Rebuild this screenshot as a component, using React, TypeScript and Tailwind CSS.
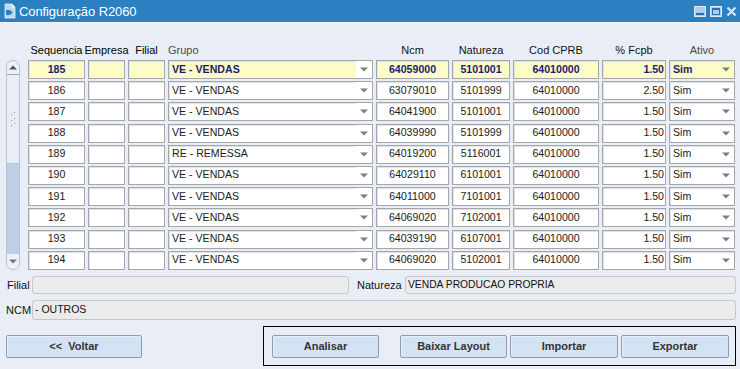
import React from "react";

const rows: string[][] = [
  ["185", "VE - VENDAS", "64059000", "5101001", "64010000", "1.50"],
  ["186", "VE - VENDAS", "63079010", "5101999", "64010000", "2.50"],
  ["187", "VE - VENDAS", "64041900", "5101001", "64010000", "1.50"],
  ["188", "VE - VENDAS", "64039990", "5101999", "64010000", "1.50"],
  ["189", "RE - REMESSA", "64019200", "5116001", "64010000", "1.50"],
  ["190", "VE - VENDAS", "64029110", "6101001", "64010000", "1.50"],
  ["191", "VE - VENDAS", "64011000", "7101001", "64010000", "1.50"],
  ["192", "VE - VENDAS", "64069020", "7102001", "64010000", "1.50"],
  ["193", "VE - VENDAS", "64039190", "6107001", "64010000", "1.50"],
  ["194", "VE - VENDAS", "64069020", "5102001", "64010000", "1.50"],
];

function DownTri({ color = "#7d7d7d" }: { color?: string }) {
  return (
    <svg width="8" height="5" viewBox="0 0 8 5">
      <path d="M0 0.5 L8 0.5 L4 4.5 Z" fill={color} />
    </svg>
  );
}

function UpTri({ color = "#555" }: { color?: string }) {
  return (
    <svg width="8" height="5" viewBox="0 0 8 5">
      <path d="M0 4.5 L8 4.5 L4 0.5 Z" fill={color} />
    </svg>
  );
}

function TitleBar() {
  return (
    <div className="h-[22px] bg-[#2b80c1] flex items-center shrink-0 relative">
      <div className="ml-[3px] w-[13px] h-[16px] flex items-center justify-center">
        <svg width="12" height="16" viewBox="0 0 12 16">
          <path d="M1 1 H8 L11 4 V15 H1 Z" fill="#bcd8f0" stroke="#e6f1fb" strokeWidth="0.8" />
          <path d="M8 1 V4 H11" fill="none" stroke="#ffffff" strokeWidth="0.8" />
          <rect x="2" y="7" width="3" height="5" fill="#2b80c1" />
          <path d="M5 6.5 L9 9.5 L5 12.5 Z" fill="#2b80c1" />
        </svg>
      </div>
      <span className="ml-[3px] text-white text-[13px] leading-none tracking-[-0.1px]">
        Configuração R2060
      </span>
      <div className="ml-auto mr-[3px] flex items-center gap-[4px]">
        <div className="w-[12px] h-[11px] bg-[#a9cdec] border border-[#d8eaf8] flex items-end justify-center pb-[1px]">
          <div className="w-[8px] h-[2px] bg-[#2b6fa8]" />
        </div>
        <div className="w-[12px] h-[11px] bg-[#a9cdec] border border-[#d8eaf8] flex items-center justify-center">
          <div className="w-[8px] h-[7px] border border-[#2b6fa8] border-t-2" />
        </div>
        <div className="w-[11px] h-[11px] flex items-center justify-center">
          <svg width="11" height="11" viewBox="0 0 11 11">
            <path d="M1.5 1.5 L9.5 9.5 M9.5 1.5 L1.5 9.5" stroke="#cfe4f6" strokeWidth="2.4" />
          </svg>
        </div>
      </div>
    </div>
  );
}

const cellBase =
  "h-[19px] border border-[#a3a7ad] shadow-[inset_1px_1px_0_#e2e2e2] flex items-center overflow-hidden whitespace-nowrap";

function Row({ r, sel }: { r: string[]; sel: boolean }) {
  const bg = sel ? "bg-[#fdfcc6]" : "bg-white";
  const txt = sel ? "font-bold text-[#1b1b6e]" : "text-[#1a1a1a]";
  return (
    <div className={`flex gap-[3px] text-[10.6px] ${txt}`}>
      <div className={`${cellBase} ${bg} w-[57px] justify-center`}>{r[0]}</div>
      <div className={`${cellBase} ${bg} w-[37px]`} />
      <div className={`${cellBase} ${bg} w-[37px]`} />
      <div className={`${cellBase} ${bg} w-[205px]`}>
        <span className="pl-[3px] flex-1">{r[1]}</span>
        <div className="w-[16px] h-full flex items-center justify-center bg-white">
          <DownTri />
        </div>
      </div>
      <div className={`${cellBase} ${bg} w-[73px] justify-center`}>{r[2]}</div>
      <div className={`${cellBase} ${bg} w-[58px] justify-center`}>{r[3]}</div>
      <div className={`${cellBase} ${bg} w-[86px] justify-center`}>{r[4]}</div>
      <div className={`${cellBase} ${bg} w-[64px] justify-end pr-[1px]`}>{r[5]}</div>
      <div className={`${cellBase} ${bg} w-[66px]`}>
        <span className="pl-[3px] flex-1">Sim</span>
        <div className="w-[16px] h-full flex items-center justify-center">
          <DownTri />
        </div>
      </div>
    </div>
  );
}

function Scrollbar() {
  return (
    <div className="w-[14px] h-[210px] border border-[#b5c4d8] rounded-[7px] overflow-hidden flex flex-col bg-[#bdcee6]">
      <div className="h-[14px] bg-[#eef2f8] flex items-center justify-center border-b border-[#9aa6b6] shrink-0">
        <UpTri />
      </div>
      <div className="h-[89px] bg-[#e9eef6] border-b border-[#b5c4d8] flex items-center justify-center shrink-0">
        <svg width="8" height="16" viewBox="0 0 8 16">
          <g fill="#9aa8ba">
            <rect x="5" y="1" width="1.2" height="1.2" />
            <rect x="2" y="3" width="1.2" height="1.2" />
            <rect x="5" y="7" width="1.2" height="1.2" />
            <rect x="2" y="9" width="1.2" height="1.2" />
            <rect x="5" y="12" width="1.2" height="1.2" />
            <rect x="2" y="14" width="1.2" height="1.2" />
          </g>
        </svg>
      </div>
      <div className="flex-1" />
      <div className="h-[15px] bg-[#eef2f8] flex items-center justify-center shrink-0">
        <DownTri color="#777" />
      </div>
    </div>
  );
}

function Btn({ label, w }: { label: string; w: string }) {
  return (
    <div
      className={`${w} h-[23px] bg-[#d3e3f3] border border-[#8e9cb0] rounded-[2px] flex items-center justify-center font-bold text-[11px] text-[#333] whitespace-pre shadow-[inset_1px_1px_0_#e6eef8]`}
    >
      {label}
    </div>
  );
}

export default function App() {
  return (
    <div className="w-[740px] h-[369px] overflow-hidden bg-[#e9eef6] font-['Liberation_Sans',Arial,sans-serif] text-[11px] text-[#111] flex flex-col">
      <TitleBar />
      <div className="h-[1px] bg-[#f4f7fb]" />
      {/* header */}
      <div className="flex gap-[3px] mt-[20px] h-[14px] items-center pl-[28px] whitespace-nowrap text-[11px]">
        <div className="w-[57px] flex justify-center text-black">Sequencia</div>
        <div className="w-[37px] flex justify-center text-black">Empresa</div>
        <div className="w-[37px] flex justify-center text-black">Filial</div>
        <div className="w-[205px] text-[#4a4a4a] pl-[0px]">Grupo</div>
        <div className="w-[73px] flex justify-center text-[#111]">Ncm</div>
        <div className="w-[58px] flex justify-center text-[#111]">Natureza</div>
        <div className="w-[86px] flex justify-center text-[#111]">Cod CPRB</div>
        <div className="w-[64px] flex justify-center text-[#111]">% Fcpb</div>
        <div className="w-[66px] flex justify-center text-[#4a4a4a]">Ativo</div>
      </div>
      {/* grid */}
      <div className="flex mt-[3px] pl-[6px]">
        <Scrollbar />
        <div className="ml-[8px] flex flex-col gap-[2.2px]">
          {rows.map((r, i) => (
            <Row key={r[0]} r={r} sel={i === 0} />
          ))}
        </div>
      </div>
      {/* Filial / Natureza */}
      <div className="flex items-center mt-[6px] pl-[6px] pr-[4px]">
        <div className="w-[26px] pl-[1px] text-[#111]">Filial</div>
        <div className="w-[317px] h-[18px] bg-[#ebebeb] border border-[#c3c8d0] rounded-[3px]" />
        <div className="ml-[8px] w-[48px] text-[#111]">Natureza</div>
        <div className="flex-1 h-[18px] bg-[#ebebeb] border border-[#c3c8d0] rounded-[3px] flex items-center pl-[2px] text-[10.3px] text-[#111]">
          VENDA PRODUCAO PROPRIA
        </div>
      </div>
      {/* NCM */}
      <div className="flex items-center mt-[6px] pl-[6px] pr-[4px]">
        <div className="w-[26px] text-[#111]">NCM</div>
        <div className="flex-1 h-[20px] bg-[#ebebeb] border border-[#c3c8d0] rounded-[3px] flex items-center pl-[2px] text-[10.5px] text-[#111]">
          - OUTROS
        </div>
      </div>
      {/* buttons */}
      <div className="flex items-center mt-[6px] pl-[6px] pr-[4px]">
        <Btn label="<<  Voltar" w="w-[136px]" />
        <div className="ml-auto w-[473px] h-[40px] border border-black flex items-center pl-[8px]">
          <Btn label="Analisar" w="w-[107px]" />
          <div className="ml-[21px] flex gap-[3px]">
            <Btn label="Baixar Layout" w="w-[107px]" />
            <Btn label="Importar" w="w-[108px]" />
            <Btn label="Exportar" w="w-[108px]" />
          </div>
        </div>
      </div>
    </div>
  );
}
